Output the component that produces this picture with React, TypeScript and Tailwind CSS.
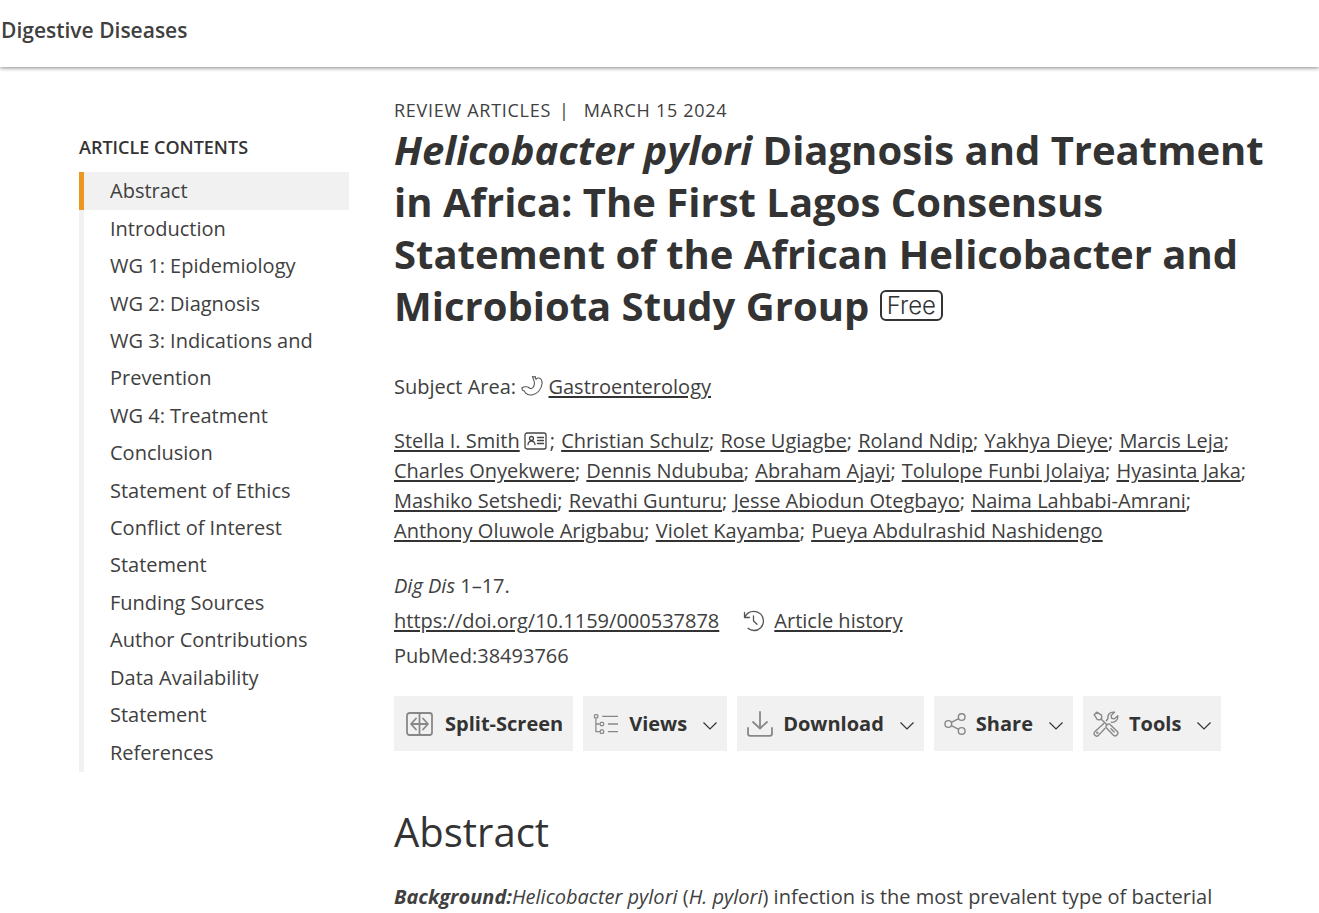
import type { ReactNode } from 'react'

const SECTIONS = [
  'Abstract',
  'Introduction',
  'WG 1: Epidemiology',
  'WG 2: Diagnosis',
  'WG 3: Indications and Prevention',
  'WG 4: Treatment',
  'Conclusion',
  'Statement of Ethics',
  'Conflict of Interest Statement',
  'Funding Sources',
  'Author Contributions',
  'Data Availability Statement',
  'References',
]

const AUTHORS = [
  'Stella I. Smith',
  'Christian Schulz',
  'Rose Ugiagbe',
  'Roland Ndip',
  'Yakhya Dieye',
  'Marcis Leja',
  'Charles Onyekwere',
  'Dennis Ndububa',
  'Abraham Ajayi',
  'Tolulope Funbi Jolaiya',
  'Hyasinta Jaka',
  'Mashiko Setshedi',
  'Revathi Gunturu',
  'Jesse Abiodun Otegbayo',
  'Naima Lahbabi-Amrani',
  'Anthony Oluwole Arigbabu',
  'Violet Kayamba',
  'Pueya Abdulrashid Nashidengo',
]

function Link({ children }: { children: ReactNode }) {
  return (
    <a href="#" className="underline decoration-[#333] decoration-2 underline-offset-2">
      {children}
    </a>
  )
}

function StomachIcon() {
  return (
    <svg viewBox="0 0 23 22" className="inline-block w-[22px] h-[22px] align-[-3px]" fill="none" stroke="#555" strokeWidth="1.1" strokeLinejoin="round" strokeLinecap="round">
      <path d="M12 1c.3 2.500 2 4 2 6.500 0 3-.8 5-2.800 6-2 .9-3-1.500-5-1.700C4 11.500 2 12 1 13" />
      <path d="M15 1c-.2 1.500.2 2.300.8 3C17 2.200 20.300 2 21.500 5c1 3 0 8-3 11.500C15 20.500 8 22 5 18.500 4 17 3.500 15.500 1.500 15.500L1 13M12 1l1.500.6L15 1" />
    </svg>
  )
}

function CardIcon() {
  return (
    <svg viewBox="0 0 23 18" className="ml-1 mr-[3px] inline-block w-[23px] h-[18px] align-[-2px]" fill="none" stroke="#444" strokeWidth="1.3" strokeLinecap="round">
      <rect x="1" y="1" width="21" height="16" rx="2" />
      <circle cx="7.500" cy="6.500" r="2" />
      <path d="M4 12.500c.3-2.300 1.700-3.300 3.500-3.300s3.200 1 3.500 3.300M13.500 5.500h6M13.500 8.500h6M13.500 11.500h6" />
    </svg>
  )
}

function HistoryIcon() {
  return (
    <svg viewBox="0 0 22 22" className="w-[22px] h-[22px]" fill="none" stroke="#555" strokeWidth="1.300" strokeLinecap="round" strokeLinejoin="round">
      <path d="M1.500 2.500v5h5M1.800 7.300C3.300 3.700 7 1.300 11 1.300c5.400 0 9.500 4.300 9.500 9.600S16.300 20.500 11 20.500c-2.300 0-4.300-.8-6-2.200M10.500 6v5l3.500 3.300" />
    </svg>
  )
}

function SplitIcon() {
  return (
    <svg viewBox="0 0 27 24" className="mx-[2px] w-[27px] h-6" fill="none" stroke="#888" strokeWidth="1.800" strokeLinecap="round" strokeLinejoin="round">
      <rect x="1" y="1" width="25" height="22" rx="2.500" />
      <path d="M13.500 1v22M5.500 12h16M10 6.500L5 12l5 5.500M17 6.500l5 5.500-5 5.500" />
    </svg>
  )
}

function ViewsIcon() {
  return (
    <svg viewBox="0 0 27 22" className="w-[26px] h-[22px]" fill="none" stroke="#888" strokeWidth="1.300">
      <path d="M3 5v14h4M3 11h4M9.500 3H26M15.500 11H26M15.500 19H26" />
      <rect x="1.500" y="1.200" width="3.500" height="3.500" rx="1" />
      <rect x="7.500" y="9.200" width="3.500" height="3.500" rx="1" />
      <rect x="7.500" y="17.200" width="3.500" height="3.500" rx="1" />
    </svg>
  )
}

function DownloadIcon() {
  return (
    <svg viewBox="0 0 26 26" className="w-[26px] h-[26px]" fill="none" stroke="#888" strokeWidth="1.800" strokeLinecap="round" strokeLinejoin="round">
      <path d="M1 17v5.500c0 1.400.9 2.300 2.300 2.300h19.400c1.400 0 2.300-.9 2.300-2.300V17M13 1v16.500M6 11l7 6.500 7-6.500" />
    </svg>
  )
}

function ShareIcon() {
  return (
    <svg viewBox="0 0 23 24" className="w-[22px] h-6" fill="none" stroke="#888" strokeWidth="1.500">
      <circle cx="4.500" cy="12" r="3.500" />
      <circle cx="18.500" cy="4.700" r="3.500" />
      <circle cx="18.500" cy="19.300" r="3.500" />
      <path d="M7.700 10.400l7.700-4.100M7.700 13.600l7.700 4.100" />
    </svg>
  )
}

function ToolsIcon() {
  return (
    <svg viewBox="0 0 26 26" className="w-[26px] h-[26px]" fill="none" stroke="#888" strokeWidth="1.400" strokeLinecap="round" strokeLinejoin="round">
      {/* screwdriver */}
      <path d="M1.200 3.700L3.700 1.200 8.500 4.200l.3 2.800-1.900 1.900-2.700-.4zM8 8l5.800 5.800" />
      <path d="M13 16.500c-.7-1.500 2-4.200 3.500-3.500l7.600 7.200c2.300 2.500-1.400 6.200-3.900 3.900zM18 17.800l3.200 3.200" />
      {/* wrench */}
      <path d="M18.500 11.300c3.600.3 6.600-2 6.300-6.600l-3.600 3.200-2.600-.7-.5-2.600 3.400-3.300c-4.200-.8-7.300 2.100-6.500 6.200l-1.700 2.200M10.800 12.500L2 20.600c-2.400 2.700 1 6 3.500 3.800l6.300-6.900" />
      <circle cx="4.300" cy="21.700" r=".5" />
    </svg>
  )
}

function Chevron() {
  return (
    <svg viewBox="0 0 14 8" className="ml-4 mt-1 w-[14px] h-2" fill="none" stroke="#333" strokeWidth="1.200">
      <path d="M.5.5L7 7l6.500-6.500" />
    </svg>
  )
}

interface ToolButtonProps {
  icon: ReactNode
  label: string
  menu?: boolean
}

function ToolButton({ icon, label, menu = true }: ToolButtonProps) {
  return (
    <button type="button" className="flex h-[55px] items-center bg-[#f1f1f1] px-[10px] text-xl font-bold text-[#333]">
      {icon}
      <span className="ml-[10px]">{label}</span>
      {menu && <Chevron />}
    </button>
  )
}

export default function App() {
  return (
    <div className="min-h-screen overflow-hidden bg-white font-['Open_Sans',sans-serif] text-xl text-[#404040]">
      <header className="flex h-[67px] items-start px-px pt-4 shadow-[0_1px_4px_#888]">
        <span className="text-[21px] leading-7 font-semibold">Digestive Diseases</span>
      </header>

      <div className="flex items-start gap-[45px] pl-[79px] pr-[49px] pt-[30px]">
        <aside className="w-[270px] shrink-0 pt-[37px]">
          <h2 className="text-lg leading-[26px] font-semibold text-[#333]">ARTICLE CONTENTS</h2>
          <ul className="mt-3 leading-[37px]">
            {SECTIONS.map((name, i) => (
              <li
                key={name}
                className={
                  i === 0
                    ? 'border-l-[5px] border-[#ec971f] bg-[#f1f1f1] pl-[26px] pb-px'
                    : 'border-l-[5px] border-[#f1f1f1] pl-[26px] pr-5 odd:pb-px last:pt-px'
                }
              >
                <a href="#">{name}</a>
              </li>
            ))}
          </ul>
        </aside>

        <main className="min-w-0 flex-1">
          <div className="flex text-lg leading-[26px] tracking-[0.04em]">
            <span>REVIEW ARTICLES</span>
            <span className="ml-2 mr-[14px]">|</span>
            <span>MARCH 15 2024</span>
          </div>

          <h1 className="mt-px text-[40px] leading-[52px] font-bold text-[#333]">
            <i>Helicobacter pylori</i> Diagnosis and Treatment in Africa: The First Lagos Consensus
            Statement of the African Helicobacter and Microbiota Study Group{' '}
            <span className="inline-block rounded-md border-2 border-[#333] px-[5px] align-[7px] font-[Inter] text-2xl leading-[27px] font-light">
              Free
            </span>
          </h1>

          <p className="mt-10 leading-[30px]">
            Subject Area: <StomachIcon /> <Link>Gastroenterology</Link>
          </p>

          <p className="mt-6 leading-[30px]">
            {AUTHORS.map((name, i) => (
              <span key={name} className="mr-px">
                <Link>{name}</Link>
                {i === 0 && <CardIcon />}
                {i < AUTHORS.length - 1 && '; '}
              </span>
            ))}
          </p>

          <div className="mt-[22px] leading-[35px]">
            <p><i>Dig Dis</i> 1–17.</p>
            <div className="flex items-center">
              <Link>https://doi.org/10.1159/000537878</Link>
              <span className="ml-6 mr-[9px]"><HistoryIcon /></span>
              <Link>Article history</Link>
            </div>
            <p>PubMed:38493766</p>
          </div>

          <div className="mt-[23px] flex flex-wrap gap-[10px]">
            <ToolButton icon={<SplitIcon />} label="Split-Screen" menu={false} />
            <ToolButton icon={<ViewsIcon />} label="Views" />
            <ToolButton icon={<DownloadIcon />} label="Download" />
            <ToolButton icon={<ShareIcon />} label="Share" />
            <ToolButton icon={<ToolsIcon />} label="Tools" />
          </div>

          <h2 className="mt-[55px] text-[40px] leading-[52px] text-[#333]">Abstract</h2>
          <p className="mt-6 leading-[30px]">
            <b><i>Background:</i></b><i>Helicobacter pylori</i> (<i>H. pylori</i>) infection is the most prevalent type of bacterial
          </p>
        </main>
      </div>
    </div>
  )
}
